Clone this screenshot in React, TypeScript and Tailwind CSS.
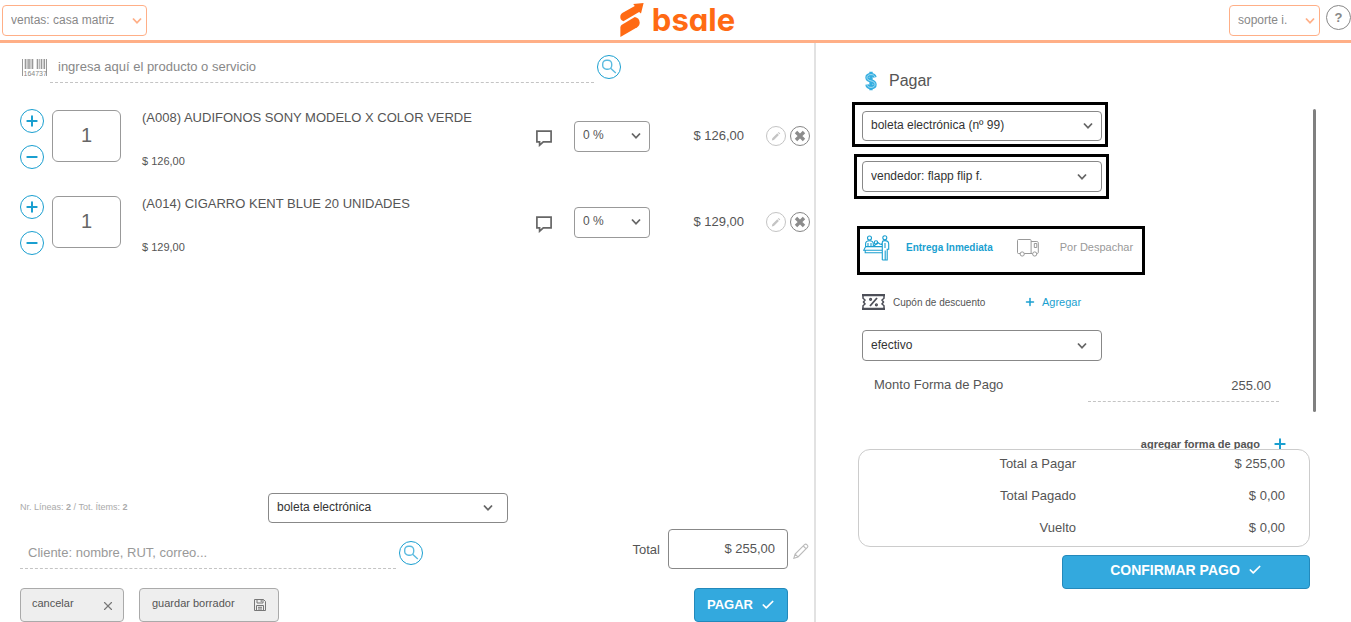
import React from "react";
import { Check, Minus, Plus, X } from "lucide-react";

type Item = { code: string; name: string; price: string };

const items: Item[] = [
  { code: "A008", name: "AUDIFONOS SONY MODELO X COLOR VERDE", price: "126,00" },
  { code: "A014", name: "CIGARRO KENT BLUE 20 UNIDADES", price: "129,00" },
];

const totals = [
  { label: "Total a Pagar", value: "$ 255,00" },
  { label: "Total Pagado", value: "$ 0,00" },
  { label: "Vuelto", value: "$ 0,00" },
];

function SelectBox({
  label,
  value,
  box,
  text = "text-[#333]",
  chevron = "right-[14px] text-[#666]",
}: {
  label: string;
  value: string;
  box: string;
  text?: string;
  chevron?: string;
}) {
  return (
    <div className={`relative shrink-0 rounded border ${box}`}>
      <select
        aria-label={label}
        className={`h-full w-full appearance-none bg-transparent pb-0.5 pl-2 pr-6 text-[12px] outline-none ${text}`}
      >
        <option>{value}</option>
      </select>
      <svg
        viewBox="0 0 10 7"
        className={`pointer-events-none absolute top-1/2 h-[7px] w-[10px] -translate-y-1/2 ${chevron}`}
        fill="none"
        stroke="currentColor"
        strokeWidth="1.8"
      >
        <path d="M1 1l4 4.3L9 1" />
      </svg>
    </div>
  );
}

function SearchButton({ label }: { label: string }) {
  return (
    <button
      aria-label={label}
      className="flex size-6 shrink-0 items-center justify-center rounded-full border border-[#1a9fd0] text-[#5bbbe0]"
    >
      <svg viewBox="0 0 16 16" className="size-4" fill="none" stroke="currentColor" strokeWidth="1.4">
        <rect x="1.7" y="1.2" width="9" height="9" rx="3.8" />
        <path d="M9.6 9.2l5.2 4.8" />
      </svg>
    </button>
  );
}

function Barcode() {
  return (
    <svg viewBox="0 0 25 17" className="h-[17px] w-[25px] shrink-0" fill="none" stroke="#999">
      <path d="M.5 0v17M24.5 0v17" strokeWidth="1" />
      <path d="M3.500 0v10M7 0v10M10.500 0v10M15.500 0v10M19.500 0v10M22.300 0v10" strokeWidth="1.6" />
      <path d="M5.300 0v10M8.800 0v10M17.500 0v10" strokeWidth=".7" />
      <text x="1.500" y="16.500" fontSize="7" fill="#888" stroke="none" fontFamily="Liberation Sans, sans-serif">
        164737
      </text>
    </svg>
  );
}

function Logo() {
  return (
    <a href="#" aria-label="bsale" className="flex h-10 items-center gap-2 pl-1 text-[#ff6a13]">
      <svg viewBox="0 0 24 35" className="h-[35px] w-6" fill="currentColor">
        <path d="M13.200 1L23.600 0l-2.600 10.600-1.900-1.600L3.400 18.300C.6 17 .3 15.700.3 13.800c0-1.900.9-3.100 2.400-4L14.800 3z" />
        <path d="M.4 34V24.600c0-1.300.5-2.200 1.500-2.900L14.800 14c3 .6 4.800 2.300 4.900 5.600 0 2.300-.8 3.600-2.500 4.600z" />
      </svg>
      <span className="font-[Inter,sans-serif] text-[31px] font-bold leading-10 [font-feature-settings:'cv11']">
        bsale
      </span>
    </a>
  );
}

function CommentIcon() {
  return (
    <svg viewBox="0 0 16 17" className="h-[17px] w-4" fill="none" stroke="currentColor" strokeWidth="1.7">
      <path d="M.9 1.200h14.200v10.600H7.300L3.600 15.200v-3.400H.9z" />
    </svg>
  );
}

function PencilSolid() {
  return (
    <svg viewBox="0 0 12 12" className="size-3" fill="#c4c4c4">
      <path d="M2.300 8.300L7.300 3.300l1.600 1.600L3.900 9.900l-2.100.6zM7.900 2.700l.8-.7 1.600 1.600-.8.7z" />
    </svg>
  );
}

function CrossSolid() {
  return (
    <svg viewBox="0 0 12 12" className="size-3" stroke="#8c8c8c" strokeWidth="3.4">
      <path d="M2 2l8 8M10 2l-8 8" />
    </svg>
  );
}

function PencilOutline() {
  return (
    <svg viewBox="0 0 16 16" className="size-4" fill="none" stroke="#bbb" strokeWidth="1.100">
      <path d="M.8 15.300l1.300-4.200L11.500 1.700c1.600-1.500 4.300 1 2.900 2.800L5 13.900zM10.300 3l2.900 2.900M2.100 11.100L5 13.900" />
    </svg>
  );
}

function FloppyIcon() {
  return (
    <svg viewBox="0 0 12 12" className="size-3" fill="none" stroke="#777" strokeWidth="1">
      <path d="M.5.5h9l2 2v9H.5zM3 .5v3.500h6V.5M7.200 1v2M2.500 11.500v-5h7v5M4 8.300h4M4 10h4" />
    </svg>
  );
}

function DollarIcon() {
  return (
    <svg viewBox="0 0 12 20" className="h-5 w-3" fill="none">
      <path
        d="M10 6.300C9.600 4.400 8.100 3.600 6 3.600S2 4.500 2 6.500s1.600 2.800 4 3.400 4 1.400 4 3.500-1.700 3-4 3-3.800-1-4-2.900M6 .8v18.400"
        stroke="#35aee0"
        strokeWidth="3.400"
      />
      <path
        d="M10 6.300C9.600 4.400 8.100 3.600 6 3.600S2 4.500 2 6.500s1.600 2.800 4 3.400 4 1.400 4 3.500-1.700 3-4 3-3.800-1-4-2.900"
        stroke="#d3effa"
        strokeWidth=".7"
      />
    </svg>
  );
}

function CounterIcon() {
  return (
    <svg viewBox="0 0 27 26" className="h-[26px] w-[27px]" fill="none" stroke="#1a9fd0" strokeWidth="1.100">
      <circle cx="6.500" cy="3" r="2" />
      <path d="M2.600 11.500V8.700c0-2 1.600-3 3.900-3s3.800 1 3.800 3v2.800M5 11.500V8M8 11.500V8" />
      <circle cx="13" cy="7.500" r="1.700" />
      <path d="M10.500 11.500l4.200-4 3 2" />
      <path d="M19 11.600H2.700L.7 15.300H19M2.200 15.300v2.500H19" />
      <circle cx="21.800" cy="2.800" r="2" />
      <path d="M19.300 25V7.500c0-1.300 1-1.900 2.500-1.900 2.800 0 3.900 1.200 3.900 3.400v5.300h-1.500V25h-2v-9.500M22.200 25h-2.900M22 8v5M17.800 9.500l1.500-1" />
    </svg>
  );
}

function TruckIcon() {
  return (
    <svg viewBox="0 0 23 18" className="h-[18px] w-[23px]" fill="none" stroke="#999" strokeWidth="1">
      <path d="M3 14.500H1.300c-.5 0-.8-.4-.8-.9V1.500c0-.6.4-1 1-1h11.600c.6 0 1 .4 1 1v13M7.300 14.500h8M14.100 2.500h5.700c1 0 1.500.6 1.500 1.600v9.400c0 .6-.4 1-1 1" />
      <path d="M17.300 4.500h2.500v4h-2.500z" />
      <circle cx="5.200" cy="15" r="2.100" />
      <circle cx="17.700" cy="15" r="2.100" />
    </svg>
  );
}

function CouponIcon() {
  return (
    <svg viewBox="0 0 23 16" className="h-4 w-[23px]" fill="none" stroke="#4d4f58">
      <path d="M0 1.200h23M0 14.800h23" strokeWidth="2.200" />
      <path d="M1 2v2.200L3 6 1.500 8 3 10l-2 1.800V14M22 2v2.200L20 6l1.500 2-1.500 2 2 1.800V14" strokeWidth="1.500" />
      <path d="M8 12l7-8" strokeWidth="1.800" />
      <circle cx="8.600" cy="5.300" r=".9" strokeWidth="1.400" />
      <circle cx="14.400" cy="10.800" r=".9" strokeWidth="1.400" />
    </svg>
  );
}

function ItemRow({ item }: { item: Item }) {
  const round = "flex size-6 items-center justify-center rounded-full border border-[#1a9fd0] text-[#1a9fd0]";
  const tool = "flex size-5 items-center justify-center rounded-full border";
  return (
    <li className="flex h-[86px] items-start pl-5 pr-1">
      <div className="flex flex-col gap-3">
        <button aria-label="Aumentar cantidad" className={round}>
          <Plus className="size-4" strokeWidth={3} />
        </button>
        <button aria-label="Disminuir cantidad" className={round}>
          <Minus className="size-4" strokeWidth={3} />
        </button>
      </div>
      <input
        aria-label="Cantidad"
        defaultValue="1"
        className="ml-2 mt-px h-[52px] w-[69px] rounded-md border border-[#999] pb-px text-center text-[20px] text-[#666] outline-none"
      />
      <div className="ml-[21px] min-w-0 flex-1">
        <p className="mt-px text-[13px] leading-4">
          ({item.code}) {item.name}
        </p>
        <p className="mt-[27px] text-[11px] leading-4">$ {item.price}</p>
      </div>
      <div className="mt-[11px] flex h-8 items-center">
        <button aria-label="Comentario" className="mt-1 text-[#666]">
          <CommentIcon />
        </button>
        <SelectBox
          label="Descuento"
          value="0 %"
          box="ml-[22px] h-[31px] w-[76px] border-[#999]"
          text="text-[#555]"
          chevron="right-2 text-[#666]"
        />
        <span className="w-[94px] text-right text-[13px]">$ {item.price}</span>
        <button aria-label="Editar" className={`${tool} ml-[22px] border-[#c4c4c4]`}>
          <PencilSolid />
        </button>
        <button aria-label="Eliminar" className={`${tool} ml-1 border-[#858585]`}>
          <CrossSolid />
        </button>
      </div>
    </li>
  );
}

export default function App() {
  return (
    <div className="flex min-h-screen flex-col bg-white font-['Liberation_Sans',Arial,sans-serif] text-[#555]">
      <header className="grid h-[43px] grid-cols-[1fr_auto_1fr] items-start border-b-3 border-[#ffaf87]">
        <div className="pl-0.5 pt-[5px]">
          <SelectBox
            label="Sucursal"
            value="ventas: casa matriz"
            box="h-[31px] w-[145px] border-[#ffaf87]"
            text="text-[#888]"
            chevron="right-1 text-[#ffaf87]"
          />
        </div>
        <Logo />
        <div className="flex justify-end gap-1.5 pt-[5px]">
          <SelectBox
            label="Usuario"
            value="soporte i."
            box="h-[31px] w-[91px] border-[#ffaf87]"
            text="text-[#888]"
            chevron="right-1 text-[#ffaf87]"
          />
          <button
            aria-label="Ayuda"
            className="size-[25px] rounded-full border border-[#888] text-[13px] font-bold leading-6 text-[#888]"
          >
            ?
          </button>
        </div>
      </header>

      <main className="grid flex-1 grid-cols-[816fr_535fr]">
        <section className="flex min-w-0 flex-col border-r-2 border-[#e2e2e2]">
          <div className="mt-3 flex items-start pl-[22px]">
            <div className="mt-1">
              <Barcode />
            </div>
            <input
              aria-label="Producto o servicio"
              placeholder="ingresa aquí el producto o servicio"
              className="ml-[3px] h-7 w-[544px] border-b border-dashed border-[#c4c4c4] pb-1 pl-2 text-[13px] outline-none placeholder:text-[#888]"
            />
            <div className="ml-[3px]">
              <SearchButton label="Buscar producto" />
            </div>
          </div>

          <ul className="mt-[26px]">
            {items.map((item) => (
              <ItemRow key={item.code} item={item} />
            ))}
          </ul>

          <div className="mt-auto pl-5">
            <div className="flex items-center">
              <p className="w-[248px] text-[9px] text-[#aaa]">
                Nr. Líneas: <b>2</b> / Tot. Ítems: <b>2</b>
              </p>
              <SelectBox
                label="Tipo de documento"
                value="boleta electrónica"
                box="h-[30px] w-60 border-[#888]"
              />
            </div>

            <div className="mt-1.5 flex items-center pr-[5px]">
              <input
                aria-label="Cliente"
                placeholder="Cliente: nombre, RUT, correo..."
                className="h-10 w-[376px] border-b border-dashed border-[#c4c4c4] pl-2 pr-2 pt-2 pb-0 text-[13px] outline-none placeholder:text-[#999]"
              />
              <div className="ml-[3px] mt-2">
                <SearchButton label="Buscar cliente" />
              </div>
              <label htmlFor="total" className="ml-auto mt-0.5 text-[13px]">
                Total
              </label>
              <input
                id="total"
                readOnly
                value="$ 255,00"
                className="ml-2 h-10 w-[120px] rounded border border-[#888] pb-0.5 pr-3 text-right text-[13px] outline-none"
              />
              <button aria-label="Editar total" className="ml-[5px] mt-1">
                <PencilOutline />
              </button>
            </div>

            <div className="mt-[19px] flex items-center pr-[26px]">
              <button className="flex h-[34px] w-[104px] items-center justify-between rounded border border-[#aaa] bg-[#eee] px-[11px] text-[11px]">
                <span className="pb-1">cancelar</span>
                <X className="mr-[-3px] mt-0.5 size-3.5 text-[#777]" strokeWidth={2} />
              </button>
              <button className="ml-[15px] flex h-[34px] w-[140px] items-center justify-between rounded border border-[#aaa] bg-[#eee] px-3 text-[11px]">
                <span className="pb-1">guardar borrador</span>
                <FloppyIcon />
              </button>
              <button className="ml-auto flex h-[34px] w-[94px] items-center justify-center gap-2 rounded border border-[#2389bb] bg-[#33a9de] text-[13px] font-bold text-white">
                PAGAR
                <Check className="size-3.5" strokeWidth={3} />
              </button>
            </div>
          </div>
        </section>

        <section className="flex min-w-0 flex-col pl-9 pr-[35px]">
          <h1 className="mt-6 flex h-7 items-center gap-3 pl-[13px] text-[16px]">
            <DollarIcon />
            <span>Pagar</span>
          </h1>

          <div className="mt-[7px] flex h-[347px] overflow-hidden">
            <div className="min-w-0 flex-1">
              <div className="h-[45px] w-64 border-3 border-black py-1.5 pl-[7px]">
                <SelectBox
                  label="Documento"
                  value="boleta electrónica (nº 99)"
                  box="h-[30px] w-60 border-[#888]"
                  chevron="right-2 text-[#666]"
                />
              </div>
              <div className="ml-0.5 mt-[7px] h-[45px] w-[255px] border-3 border-black py-1 pl-[5px]">
                <SelectBox label="Vendedor" value="vendedor: flapp flip f." box="h-[31px] w-60 border-[#888]" />
              </div>

              <div className="ml-[5px] mt-[27px] flex h-[49px] w-72 items-center border-3 border-black pb-1.5 pl-[3px]">
                <button className="flex items-center gap-4 text-[10px] font-bold text-[#1a9fd0]">
                  <CounterIcon />
                  Entrega Inmediata
                </button>
                <button className="ml-6 flex items-center gap-5 text-[11px] text-[#999]">
                  <TruckIcon />
                  Por Despachar
                </button>
              </div>

              <div className="ml-2.5 mt-[17px] flex h-5 items-center text-[11px]">
                <CouponIcon />
                <span className="ml-2 w-24 text-[10px]">Cupón de descuento</span>
                <button className="ml-[35px] flex items-center gap-1.5 text-[#1a9fd0]">
                  <Plus className="size-3" strokeWidth={3} />
                  Agregar
                </button>
              </div>

              <div className="ml-2.5 mt-[18px]">
                <SelectBox label="Forma de pago" value="efectivo" box="h-[31px] w-60 border-[#888]" />
              </div>

              <div className="ml-[22px] mt-3 flex h-[29px] items-start justify-between pr-[34px] text-[13px]">
                <label htmlFor="monto" className="pt-0.5">
                  Monto Forma de Pago
                </label>
                <input
                  id="monto"
                  defaultValue="255.00"
                  className="h-[29px] w-[191px] border-b border-dashed border-[#c4c4c4] pb-1 pr-2 text-right text-[13px] outline-none"
                />
              </div>

              <button className="ml-auto mt-[34px] flex items-center gap-3 pr-[25px] text-[11px] font-bold leading-4">
                agregar forma de pago
                <Plus className="size-4 text-[#1a9fd0]" strokeWidth={3} />
              </button>
            </div>
            <div className="mt-[7px] h-[303px] w-[3px] shrink-0 rounded-full bg-[#808080]" />
          </div>

          <dl className="ml-1.5 h-[98px] w-[452px] rounded-xl border border-[#ccc] pr-6 text-[13px]">
            {totals.map((row) => (
              <div key={row.label} className="flex h-8 items-center">
                <dt className="w-[217px] pb-1 text-right">{row.label}</dt>
                <dd className="flex-1 pb-1 text-right">{row.value}</dd>
              </div>
            ))}
          </dl>

          <button className="ml-[210px] mt-2 flex h-[34px] w-[248px] items-center justify-center gap-2 rounded border border-[#2389bb] bg-[#33a9de] pb-1 text-[14px] font-bold text-white">
            CONFIRMAR PAGO
            <Check className="size-3.5" strokeWidth={3} />
          </button>
        </section>
      </main>
    </div>
  );
}
